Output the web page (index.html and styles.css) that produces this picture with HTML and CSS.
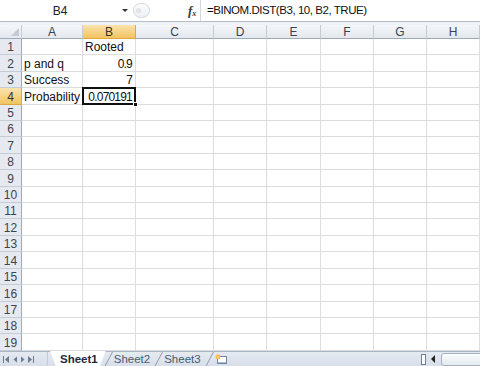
FILE: index.html
```html
<!DOCTYPE html>
<html lang="en">
<head>
    <meta charset="UTF-8">
    <meta name="viewport" content="width=device-width, initial-scale=1.0">
    <title>Binomial Distribution</title>
    <link rel="stylesheet" href="styles.css">
</head>
<body>

    <div class="formula-bar">
        <div class="name-box">
            <span class="name-text">B4</span>
            <span class="dropdown"></span>
        </div>
        <div class="bar-handle"><span class="handle-dot"></span></div>
        <div class="fx">f<sub>x</sub></div>
        <div class="formula">=BINOM.DIST(B3, 10, B2, TRUE)</div>
    </div>
    <div class="sheet-top"></div>

    <table class="sheet">
        <colgroup>
            <col class="col-hdr">
            <col class="col-a">
            <col class="col-b">
            <col class="col-c">
            <col class="col-d">
            <col class="col-e">
            <col class="col-f">
            <col class="col-g">
            <col class="col-h">
        </colgroup>
        <thead>
            <tr>
                <th class="corner"></th>
                <th>A</th><th class="active">B</th><th>C</th><th>D</th><th>E</th><th>F</th><th>G</th><th>H</th>
            </tr>
        </thead>
        <tbody>
            <tr><th>1</th><td></td><td>Rooted</td><td></td><td></td><td></td><td></td><td></td><td></td></tr>
            <tr><th>2</th><td>p and q</td><td class="num">0.9</td><td></td><td></td><td></td><td></td><td></td><td></td></tr>
            <tr><th>3</th><td>Success</td><td class="num">7</td><td></td><td></td><td></td><td></td><td></td><td></td></tr>
            <tr><th class="active">4</th><td>Probability</td><td class="num selected">0.070191</td><td></td><td></td><td></td><td></td><td></td><td></td></tr>
            <tr><th>5</th><td></td><td></td><td></td><td></td><td></td><td></td><td></td><td></td></tr>
            <tr><th>6</th><td></td><td></td><td></td><td></td><td></td><td></td><td></td><td></td></tr>
            <tr><th>7</th><td></td><td></td><td></td><td></td><td></td><td></td><td></td><td></td></tr>
            <tr><th>8</th><td></td><td></td><td></td><td></td><td></td><td></td><td></td><td></td></tr>
            <tr><th>9</th><td></td><td></td><td></td><td></td><td></td><td></td><td></td><td></td></tr>
            <tr><th>10</th><td></td><td></td><td></td><td></td><td></td><td></td><td></td><td></td></tr>
            <tr><th>11</th><td></td><td></td><td></td><td></td><td></td><td></td><td></td><td></td></tr>
            <tr><th>12</th><td></td><td></td><td></td><td></td><td></td><td></td><td></td><td></td></tr>
            <tr><th>13</th><td></td><td></td><td></td><td></td><td></td><td></td><td></td><td></td></tr>
            <tr><th>14</th><td></td><td></td><td></td><td></td><td></td><td></td><td></td><td></td></tr>
            <tr><th>15</th><td></td><td></td><td></td><td></td><td></td><td></td><td></td><td></td></tr>
            <tr><th>16</th><td></td><td></td><td></td><td></td><td></td><td></td><td></td><td></td></tr>
            <tr><th>17</th><td></td><td></td><td></td><td></td><td></td><td></td><td></td><td></td></tr>
            <tr><th>18</th><td></td><td></td><td></td><td></td><td></td><td></td><td></td><td></td></tr>
            <tr><th>19</th><td></td><td></td><td></td><td></td><td></td><td></td><td></td><td></td></tr>
        </tbody>
    </table>

    <div class="tab-bar">
        <div class="tab-nav">
            <svg width="36" height="9" viewBox="0 0 36 9">
                <rect x="3" y="1" width="1" height="7" fill="#6b7b92"/>
                <polygon points="9,1 9,8 5,4.5" fill="#6b7b92"/>
                <polygon points="17,1.5 17,7.5 13.5,4.5" fill="#6b7b92"/>
                <polygon points="21,1.5 21,7.5 24.5,4.5" fill="#6b7b92"/>
                <polygon points="28,1 28,8 32,4.5" fill="#6b7b92"/>
                <rect x="33" y="1" width="1" height="7" fill="#6b7b92"/>
            </svg>
        </div>
        <div class="tabs">
            <span class="tab active">Sheet1</span>
            <span class="tab">Sheet2</span>
            <span class="tab">Sheet3</span>
            <span class="tab new-sheet">
                <svg width="13" height="11" viewBox="0 0 13 11">
                    <rect x="2.5" y="2.5" width="9" height="7" fill="#fff" stroke="#6d87aa"/>
                    <rect x="3" y="8" width="8" height="1" fill="#a9bbd3"/>
                    <circle cx="3" cy="3" r="2.4" fill="#f5b640"/>
                    <circle cx="3" cy="3" r="1.1" fill="#fde29a"/>
                </svg>
            </span>
        </div>
        <div class="tab-space"></div>
        <div class="split-box"></div>
        <div class="scroll-left"></div>
        <div class="scroll-thumb"></div>
    </div>

</body>
</html>
```

FILE: styles.css
```css
body {
    font-family: "Liberation Sans", Arial, sans-serif;
    background-color: #fff;
    margin: 0;
    padding: 0;
    width: 480px;
    height: 366px;
    overflow: hidden;
}

/* formula bar */

.formula-bar {
    display: flex;
    align-items: center;
    height: 22px;
    background-color: #fff;
    border-bottom: 1px solid #b4bcc7;
    box-sizing: border-box;
}

.name-box {
    display: flex;
    align-items: center;
    width: 133px;
    height: 100%;
}

.name-text {
    width: 120px;
    text-align: center;
    font-size: 12px;
    color: #222;
}

.dropdown {
    margin-left: 2px;
    width: 0;
    height: 0;
    border-left: 3px solid transparent;
    border-right: 3px solid transparent;
    border-top: 3px solid #333;
}

.bar-handle {
    display: flex;
    align-items: center;
    width: 17px;
    height: 15px;
    box-sizing: border-box;
    border: 1px solid #d2d7de;
    border-radius: 8px;
    background: linear-gradient(#fdfdfe, #eceff3);
}

.handle-dot {
    width: 5px;
    height: 5px;
    margin-left: 2px;
    border-radius: 50%;
    background-color: #dfe3e8;
}

.fx {
    margin-left: 38px;
    width: 11px;
    font-family: "Liberation Serif", serif;
    font-style: italic;
    font-weight: bold;
    font-size: 13px;
    color: #3a3a3a;
    line-height: 1;
}

.fx sub {
    font-size: 8px;
    vertical-align: -1px;
}

.formula {
    flex: 1;
    margin-left: 1px;
    height: 100%;
    padding-left: 6px;
    border-left: 1px solid #d2d7de;
    font-size: 11.5px;
    letter-spacing: -0.45px;
    line-height: 21px;
    color: #111;
}

.sheet-top {
    height: 3px;
    background-color: #eef1f5;
}

/* grid */

.sheet {
    width: 480px;
    table-layout: fixed;
    border-collapse: separate;
    border-spacing: 0;
}

.col-hdr { width: 22px; }
.col-a { width: 61px; }
.col-b { width: 53px; }
.col-c { width: 78px; }
.col-d { width: 53px; }
.col-e { width: 54px; }
.col-f { width: 53px; }
.col-g { width: 53px; }
.col-h { width: 53px; }

.sheet thead tr {
    height: 14px;
}

.sheet thead th {
    padding: 1px 0 0;
    font-weight: normal;
    font-size: 12px;
    color: #3b4352;
    background: linear-gradient(#f4f6f9, #e3e8ee);
    border-right: 1px solid #c6ccd5;
    border-bottom: 1px solid #9fabba;
    text-align: center;
    line-height: 12px;
}

.sheet tbody tr {
    height: 16.42px;
}

.sheet tbody th {
    padding: 0;
    font-weight: normal;
    font-size: 12px;
    line-height: 14px;
    color: #3b4352;
    background-color: #e6eaf0;
    border-right: 1px solid #9fabba;
    border-bottom: 1px solid #c6ccd5;
    text-align: center;
    vertical-align: bottom;
}

.sheet th.active {
    background: linear-gradient(#fae3ac, #f2c462);
    border-right-color: #e0a640;
    border-bottom-color: #e0a640;
    color: #333;
}

.sheet th.corner {
    position: relative;
}

.sheet th.corner::after {
    content: "";
    position: absolute;
    right: 2px;
    bottom: 2px;
    width: 0;
    height: 0;
    border-left: 8px solid transparent;
    border-bottom: 8px solid #c3cad3;
}

.sheet td {
    padding: 0 2px;
    font-size: 12px;
    line-height: 14px;
    color: #111;
    border-right: 1px solid #dadcdd;
    border-bottom: 1px solid #dadcdd;
    white-space: nowrap;
    overflow: hidden;
    vertical-align: bottom;
}

.sheet td.num {
    text-align: right;
    letter-spacing: -0.8px;
    padding-right: 3px;
}

.sheet td.selected {
    position: relative;
    overflow: visible;
}

.sheet td.selected::before {
    content: "";
    position: absolute;
    left: -1px;
    top: -1px;
    right: -1px;
    bottom: -1px;
    border: 2px solid #111;
}

.sheet td.selected::after {
    content: "";
    position: absolute;
    right: -3px;
    bottom: -3px;
    width: 5px;
    height: 5px;
    background-color: #111;
    border: 1px solid #fff;
    box-sizing: border-box;
}

/* sheet tabs */

.tab-bar {
    display: flex;
    align-items: center;
    height: 15px;
    background: linear-gradient(#e5eaf1, #d7dee8);
    border-top: 1px solid #a9b5c5;
    font-size: 11.5px;
    color: #4a5a72;
}

.tab-nav {
    display: flex;
    align-items: center;
    width: 47px;
    height: 100%;
    border-right: 1px solid #c2cad6;
}

.tabs {
    display: flex;
    height: 100%;
}

.tab {
    position: relative;
    display: flex;
    align-items: center;
    padding: 0 8px 0 6px;
    z-index: 0;
}

.tab::before {
    content: "";
    position: absolute;
    left: 0;
    top: 0;
    bottom: 0;
    border-left: 1px solid #8e9db2;
    transform: skewX(-28deg);
}

.tab.active {
    padding: 0 10px 0 12px;
    font-weight: bold;
    color: #1e2a3c;
    margin-top: -1px;
}

.tab.active::before {
    left: 2px;
    right: 2px;
    border: none;
    transform: none;
    background-color: #fff;
    clip-path: polygon(0 0, 100% 0, calc(100% - 6px) 100%, 6px 100%);
    z-index: -1;
}

.new-sheet {
    padding: 0 6px 0 6px;
}

.tab-space {
    flex: 1;
}

.split-box {
    width: 3px;
    height: 9px;
    border: 1px solid #6f7f96;
    background-color: #fff;
    margin-right: 5px;
}

.scroll-left {
    width: 0;
    height: 0;
    border-top: 4px solid transparent;
    border-bottom: 4px solid transparent;
    border-right: 4px solid #222;
    margin-right: 6px;
}

.scroll-thumb {
    width: 40px;
    height: 11px;
    margin-right: -3px;
    border: 1px solid #a6b2c2;
    border-radius: 3px;
    background: linear-gradient(#fbfcfd, #e4e9f0);
}
```
